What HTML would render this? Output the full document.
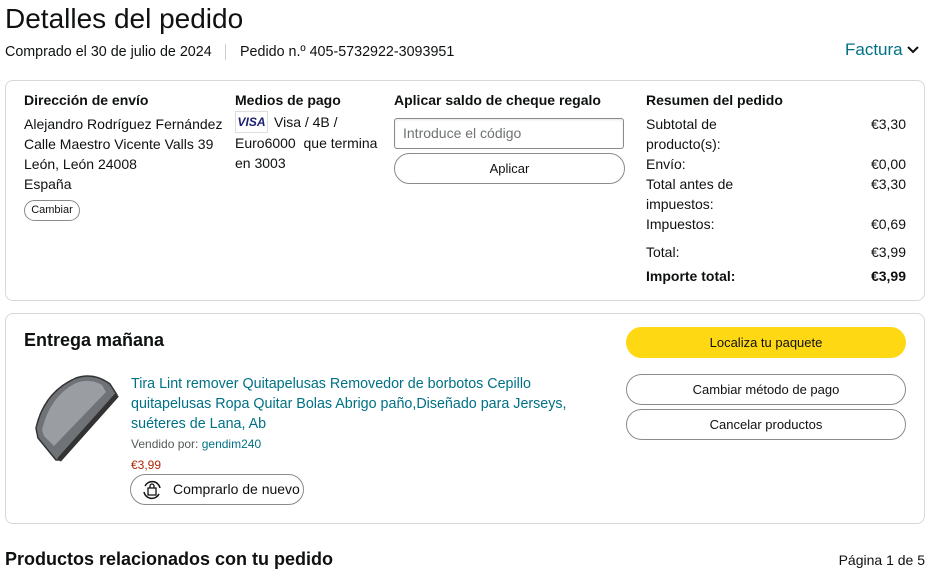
<!DOCTYPE html><html><head><meta charset="utf-8"><style>
body{margin:0;width:942px;height:580px;overflow:hidden;background:#fff;font-family:"Liberation Sans",sans-serif;color:#0f1111;font-size:14px;position:relative}
.a{position:absolute;white-space:nowrap}
.box{position:absolute;border:1px solid #d5d9d9;border-radius:8px}
b{font-weight:bold}
.btn{position:absolute;border:1px solid #888c8c;border-radius:16px;text-align:center;font-size:13px;box-sizing:border-box}
.l{line-height:20px}
.link{color:#007185}
</style></head><body>
<div class="a" style="left:5px;top:3px;font-size:28px">Detalles del pedido</div>
<div class="a" style="left:5px;top:44px;font-size:14.3px">Comprado el 30 de julio de 2024</div>
<div class="a" style="left:225px;top:44px;width:1px;height:16px;background:#ccc"></div>
<div class="a" style="left:240px;top:44px;font-size:14.3px">Pedido n.º 405-5732922-3093951</div>
<div class="a link" style="left:845px;top:40px;font-size:17px">Factura <svg width="12" height="10" viewBox="0 0 12 10"><path d="M1 2l5 5 5-5" stroke="#0f1111" stroke-width="2" fill="none"/></svg></div>
<div class="box" style="left:5px;top:80px;width:918px;height:219px"></div>
<div class="a" style="left:24px;top:92px"><b>Dirección de envío</b></div>
<div class="a l" style="left:24px;top:114px">Alejandro Rodríguez Fernández<br>Calle Maestro Vicente Valls 39<br>León, León 24008<br>España</div>
<div class="btn" style="left:24px;top:200px;width:56px;height:21px;line-height:19px;font-size:11px">Cambiar</div>
<div class="a" style="left:235px;top:92px"><b>Medios de pago</b></div>
<div class="a" style="left:235px;top:111px;width:31px;height:20px;border:1px solid #ddd;color:#1a1f71;font-weight:bold;font-style:italic;font-size:12px;line-height:20px;text-align:center">VISA</div>
<div class="a l" style="left:274px;top:112px">Visa / 4B /</div>
<div class="a l" style="left:235px;top:133px">Euro6000 &nbsp;que termina<br>en 3003</div>
<div class="a" style="left:394px;top:92px"><b>Aplicar saldo de cheque regalo</b></div>
<div class="a" style="left:394px;top:118px;width:228px;height:29px;border:1px solid #888c8c;border-radius:3px;box-shadow:inset 0 1px 2px rgba(0,0,0,.1);color:#6f7373;line-height:29px;text-indent:8px">Introduce el código</div>
<div class="btn" style="left:394px;top:153px;width:231px;height:31px;line-height:29px">Aplicar</div>
<div class="a" style="left:646px;top:92px"><b>Resumen del pedido</b></div>
<div class="a l" style="left:646px;top:114px">Subtotal de<br>producto(s):<br>Envío:<br>Total antes de<br>impuestos:<br>Impuestos:</div>
<div class="a l" style="left:646px;top:242px">Total:</div>
<div class="a l" style="left:646px;top:266px"><b>Importe total:</b></div>
<div class="a l" style="right:36px;top:114px;text-align:right">€3,30<br><br>€0,00<br>€3,30<br><br>€0,69</div>
<div class="a l" style="right:36px;top:242px">€3,99</div>
<div class="a l" style="right:36px;top:266px"><b>€3,99</b></div>
<div class="box" style="left:5px;top:313px;width:918px;height:209px"></div>
<div class="a" style="left:24px;top:330px;font-size:18px"><b>Entrega mañana</b></div>
<div class="btn" style="left:626px;top:327px;width:280px;height:31px;line-height:31px;background:#ffd814;border:none">Localiza tu paquete</div>
<div class="btn" style="left:626px;top:374px;width:280px;height:31px;line-height:29px">Cambiar método de pago</div>
<div class="btn" style="left:626px;top:409px;width:280px;height:31px;line-height:29px">Cancelar productos</div>
<svg class="a" style="left:34px;top:374px" width="90" height="90" viewBox="0 0 90 90"><path d="M83 21 L76 10 Q60 -2 42 4 Q10 18 2 54 L4 64 L22 86 L27 86 Z" fill="#6f7378" stroke="#333" stroke-width="1.5"/><path d="M72 18 L68 11 Q56 4 42 9 Q16 22 8 56 L10 62 L20 72 Z" fill="#9a9ea3"/><path d="M25 86 L83 21" stroke="#333" stroke-width="5"/></svg>
<div class="a l link" style="left:131px;top:374px;font-size:14.3px">Tira Lint remover Quitapelusas Removedor de borbotos Cepillo<br>quitapelusas Ropa Quitar Bolas Abrigo paño,Diseñado para Jerseys,<br>suéteres de Lana, Ab</div>
<div class="a" style="left:131px;top:437px;font-size:12px;color:#565959">Vendido por: <span class="link">gendim240</span></div>
<div class="a" style="left:131px;top:458px;font-size:12px;color:#b12704">€3,99</div>
<div class="btn" style="left:130px;top:474px;width:174px;height:31px;line-height:29px;font-size:14px;text-align:left;padding-left:42px">Comprarlo de nuevo</div>
<svg class="a" style="left:140px;top:479px" width="24" height="22" viewBox="0 0 24 22"><path d="M4 13a8 8 0 0 0 15 2M20 9A8 8 0 0 0 5 7" stroke="#111" stroke-width="1.5" fill="none"/><path d="M8 9h8v7H8z M10 9V7a2 2 0 0 1 4 0v2" stroke="#111" stroke-width="1.3" fill="none"/></svg>
<div class="a" style="left:5px;top:549px;font-size:18px"><b>Productos relacionados con tu pedido</b></div>
<div class="a" style="right:17px;top:552px">Página 1 de 5</div>
</body></html>
